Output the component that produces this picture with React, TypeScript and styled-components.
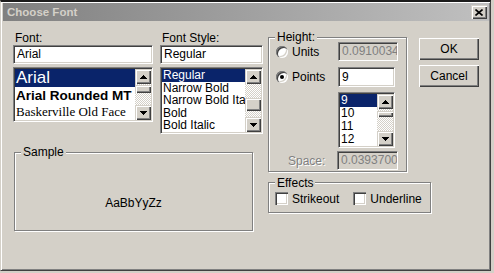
import React from 'react';
import styled, { createGlobalStyle, css } from 'styled-components';

const FACE = '#d4d0c8';
const SHADOW = '#808080';
const DARK = '#404040';
const NAVY = '#0a246a';

const GlobalStyle = createGlobalStyle`
  html, body {
    margin: 0;
    padding: 0;
    background: ${FACE};
  }
  body {
    font-family: 'Liberation Sans', Arial, sans-serif;
    font-size: 12px;
    color: #000;
  }
  * {
    box-sizing: border-box;
  }
`;

const sunken = css`
  border: 1px solid;
  border-color: ${SHADOW} #fff #fff ${SHADOW};
  box-shadow: inset 1px 1px ${DARK}, inset -1px -1px ${FACE};
  padding: 1px;
`;

const raised = css`
  background: ${FACE};
  box-shadow: inset 1px 1px ${FACE}, inset 2px 2px #fff, inset -1px -1px ${DARK},
    inset -2px -2px ${SHADOW};
`;

const Window = styled.div`
  width: 491px;
  height: 271px;
  background: ${FACE};
  border-top: 2px solid #1c1c1c;
  border-left: 1px solid ${FACE};
  border-right: 1px solid ${DARK};
  border-bottom: 1px solid ${DARK};
  box-shadow: inset 1px 1px #fff, inset -1px -1px ${SHADOW};
  display: flex;
  flex-direction: column;
`;

const TitleBar = styled.div`
  height: 18px;
  margin: 1px 1px 0 2px;
  padding: 0 2px 0 4px;
  background: linear-gradient(to right, #808080, #c0c0c0);
  display: flex;
  align-items: center;
  justify-content: space-between;
`;

const TitleText = styled.span`
  font-weight: 700;
  font-size: 11.5px;
  color: ${FACE};
`;

const CloseButton = styled.div`
  ${raised};
  width: 16px;
  height: 14px;
  display: flex;
  align-items: center;
  justify-content: center;
`;

const Body = styled.div`
  display: flex;
  align-items: flex-start;
  padding: 10px 0 0 12px;
`;

const LeftPane = styled.div`
  width: 250px;
  display: flex;
  flex-direction: column;
`;

const ListsRow = styled.div`
  display: flex;
  gap: 7px;
`;

const Column = styled.div<{ $width: number }>`
  width: ${(p) => p.$width}px;
  display: flex;
  flex-direction: column;
`;

const FieldLabel = styled.div`
  height: 14px;
  line-height: 14px;
  padding-left: 2px;
`;

const TextBox = styled.div<{ $width?: number; $height?: number; $disabled?: boolean }>`
  ${sunken};
  width: ${(p) => (p.$width ? `${p.$width}px` : 'auto')};
  height: ${(p) => p.$height ?? 19}px;
  padding: 1px 3px;
  line-height: ${(p) => (p.$height ?? 19) - 4}px;
  background: ${(p) => (p.$disabled ? FACE : '#fff')};
  color: ${(p) => (p.$disabled ? SHADOW : '#000')};
  white-space: nowrap;
  overflow: hidden;
`;

const ListBox = styled.div<{ $height: number; $width?: number }>`
  ${sunken};
  margin-top: 3px;
  width: ${(p) => (p.$width ? `${p.$width}px` : 'auto')};
  height: ${(p) => p.$height}px;
  background: #fff;
  display: flex;
`;

const Items = styled.div`
  flex: 1;
  min-width: 0;
  overflow: hidden;
`;

const Item = styled.div<{
  $selected?: boolean;
  $h?: number;
  $size?: number;
  $weight?: number;
  $family?: string;
}>`
  height: ${(p) => p.$h ?? 13}px;
  line-height: ${(p) => p.$h ?? 13}px;
  padding-left: 1px;
  font-family: ${(p) => p.$family ?? "'Liberation Sans', Arial, sans-serif"};
  font-size: ${(p) => p.$size ?? 12}px;
  font-weight: ${(p) => p.$weight ?? 400};
  white-space: nowrap;
  overflow: hidden;
  background: ${(p) => (p.$selected ? NAVY : 'transparent')};
  color: ${(p) => (p.$selected ? '#fff' : '#000')};
`;

const Bar = styled.div`
  width: 16px;
  display: flex;
  flex-direction: column;
`;

const ArrowButton = styled.div<{ $h: number }>`
  ${raised};
  height: ${(p) => p.$h}px;
  flex: none;
  display: flex;
  align-items: center;
  justify-content: center;
`;

const Track = styled.div<{ $h?: number }>`
  flex: ${(p) => (p.$h === undefined ? '1' : 'none')};
  height: ${(p) => (p.$h === undefined ? 'auto' : `${p.$h}px`)};
  background: repeating-conic-gradient(#fff 0 25%, ${FACE} 0 50%) 0 0 / 2px 2px;
`;

const Thumb = styled.div<{ $h: number }>`
  ${raised};
  height: ${(p) => p.$h}px;
  flex: none;
`;

const ArrowGlyph = styled.svg<{ $down?: boolean }>`
  display: block;
  transform: ${(p) => (p.$down ? 'rotate(180deg)' : 'none')};
`;

const Arrow = ({ down, h }: { down?: boolean; h: number }) => (
  <ArrowButton $h={h}>
    <ArrowGlyph $down={down} width="7" height="4" viewBox="0 0 7 4" shapeRendering="crispEdges">
      <path d="M3 0h1v1H3zM2 1h3v1H2zM1 2h5v1H1zM0 3h7v1H0z" fill="#000" />
    </ArrowGlyph>
  </ArrowButton>
);

const ScrollBar = ({ offset, thumb, arrow = 15 }: { offset: number; thumb: number; arrow?: number }) => (
  <Bar>
    <Arrow h={arrow} />
    <Track $h={offset} />
    <Thumb $h={thumb} />
    <Track />
    <Arrow h={arrow} down />
  </Bar>
);

const GroupBox = styled.div<{ $width: number; $height: number }>`
  position: relative;
  width: ${(p) => p.$width}px;
  height: ${(p) => p.$height}px;
  border: 1px solid ${SHADOW};
  box-shadow: inset 1px 1px #fff, 1px 1px #fff;
`;

const Caption = styled.span<{ $top?: number }>`
  position: absolute;
  top: ${(p) => p.$top ?? -8}px;
  left: 6px;
  padding: 0 2px;
  line-height: 14px;
  background: ${FACE};
`;

const SampleBox = styled(GroupBox)`
  margin: 18px 0 0 1px;
  display: flex;
  justify-content: center;
  padding-top: 43px;
`;

const SampleText = styled.div`
  line-height: 14px;
  font-size: 12px;
`;

const RightPane = styled.div`
  margin-left: 5px;
  display: flex;
  flex-direction: column;
`;

const TopRow = styled.div`
  display: flex;
  align-items: flex-start;
`;

const HeightBox = styled(GroupBox)`
  margin-top: 6px;
  padding: 4px 0 0 7px;
  display: flex;
  flex-direction: column;
`;

const HeightRow = styled.div<{ $mt?: number }>`
  display: flex;
  align-items: center;
  margin-top: ${(p) => p.$mt ?? 0}px;
`;

const LeftCell = styled.div<{ $width?: number; $pad?: number }>`
  width: ${(p) => p.$width ?? 62}px;
  padding-left: ${(p) => p.$pad ?? 0}px;
  display: flex;
  align-items: center;
  gap: 4px;
  flex: none;
`;

const Radio = styled.span<{ $checked?: boolean }>`
  width: 12px;
  height: 12px;
  border-radius: 50%;
  background: #fff;
  box-shadow: inset 1px 1px ${SHADOW}, inset 2px 2px ${DARK}, inset -1px -1px #fff,
    inset -2px -2px ${FACE};
  display: flex;
  align-items: center;
  justify-content: center;
  flex: none;

  &::after {
    content: '';
    width: 4px;
    height: 4px;
    border-radius: 50%;
    background: ${(p) => (p.$checked ? '#000' : 'transparent')};
  }
`;

const DisabledLabel = styled.span`
  color: ${SHADOW};
  text-shadow: 1px 1px #fff;
`;

const ButtonCol = styled.div`
  margin: 7px 0 0 12px;
  display: flex;
  flex-direction: column;
  gap: 5px;
`;

const PushButton = styled.div`
  width: 60px;
  height: 22px;
  background: ${FACE};
  box-shadow: inset 1px 1px #fff, inset -1px -1px ${DARK}, inset -2px -2px ${SHADOW};
  display: flex;
  align-items: center;
  justify-content: center;
`;

const EffectsBox = styled(GroupBox)`
  margin-top: 10px;
  padding: 9px 0 0 6px;
  display: flex;
  align-items: flex-start;
`;

const CheckItem = styled.div<{ $ml?: number }>`
  display: flex;
  align-items: center;
  gap: 4px;
  height: 13px;
  margin-left: ${(p) => p.$ml ?? 0}px;
`;

const CheckBox = styled.span`
  width: 13px;
  height: 13px;
  background: #fff;
  box-shadow: inset 1px 1px ${SHADOW}, inset 2px 2px ${DARK}, inset -1px -1px #fff,
    inset -2px -2px ${FACE};
`;

export default function App() {
  return (
    <>
      <GlobalStyle />
      <Window>
        <TitleBar>
          <TitleText>Choose Font</TitleText>
          <CloseButton>
            <svg width="8" height="7" viewBox="0 0 8 7">
              <path d="M0.5 0.5L7.5 6.5M7.5 0.5L0.5 6.5" stroke="#000" strokeWidth="1.6" />
            </svg>
          </CloseButton>
        </TitleBar>

        <Body>
          <LeftPane>
            <ListsRow>
              <Column $width={140}>
                <FieldLabel>Font:</FieldLabel>
                <TextBox>Arial</TextBox>
                <ListBox $height={55}>
                  <Items>
                    <Item $selected $h={18} $size={17}>Arial</Item>
                    <Item $h={17} $size={13.5} $weight={700}>Arial Rounded MT</Item>
                    <Item $h={16} $size={13} $family="'Liberation Serif', serif">
                      Baskerville Old Face
                    </Item>
                  </Items>
                  <ScrollBar offset={1} thumb={8} />
                </ListBox>
              </Column>

              <Column $width={103}>
                <FieldLabel>Font Style:</FieldLabel>
                <TextBox>Regular</TextBox>
                <ListBox $height={67}>
                  <Items>
                    <Item $selected $h={12.6}>Regular</Item>
                    <Item $h={12.6}>Narrow Bold</Item>
                    <Item $h={12.6}>Narrow Bold Italic</Item>
                    <Item $h={12.6}>Bold</Item>
                    <Item $h={12.6}>Bold Italic</Item>
                  </Items>
                  <ScrollBar offset={14} thumb={13} />
                </ListBox>
              </Column>
            </ListsRow>

            <SampleBox $width={239} $height={79}>
              <Caption>Sample</Caption>
              <SampleText>AaBbYyZz</SampleText>
            </SampleBox>
          </LeftPane>

          <RightPane>
            <TopRow>
              <HeightBox $width={139} $height={135}>
                <Caption>Height:</Caption>
                <HeightRow>
                  <LeftCell>
                    <Radio />
                    <span>Units</span>
                  </LeftCell>
                  <TextBox $width={60} $disabled>0.091003417</TextBox>
                </HeightRow>
                <HeightRow $mt={6}>
                  <LeftCell>
                    <Radio $checked />
                    <span>Points</span>
                  </LeftCell>
                  <TextBox $width={57} $height={20}>9</TextBox>
                </HeightRow>
                <HeightRow $mt={2}>
                  <LeftCell />
                  <ListBox $height={56} $width={57}>
                    <Items>
                      <Item $selected>9</Item>
                      <Item>10</Item>
                      <Item>11</Item>
                      <Item>12</Item>
                    </Items>
                    <ScrollBar offset={2} thumb={6} />
                  </ListBox>
                </HeightRow>
                <HeightRow $mt={3}>
                  <LeftCell $width={61} $pad={12}>
                    <DisabledLabel>Space:</DisabledLabel>
                  </LeftCell>
                  <TextBox $width={61} $disabled>0.039370079</TextBox>
                </HeightRow>
              </HeightBox>

              <ButtonCol>
                <PushButton>OK</PushButton>
                <PushButton>Cancel</PushButton>
              </ButtonCol>
            </TopRow>

            <EffectsBox $width={163} $height={31}>
              <Caption $top={-7}>Effects</Caption>
              <CheckItem>
                <CheckBox />
                <span>Strikeout</span>
              </CheckItem>
              <CheckItem $ml={14}>
                <CheckBox />
                <span>Underline</span>
              </CheckItem>
            </EffectsBox>
          </RightPane>
        </Body>
      </Window>
    </>
  );
}
